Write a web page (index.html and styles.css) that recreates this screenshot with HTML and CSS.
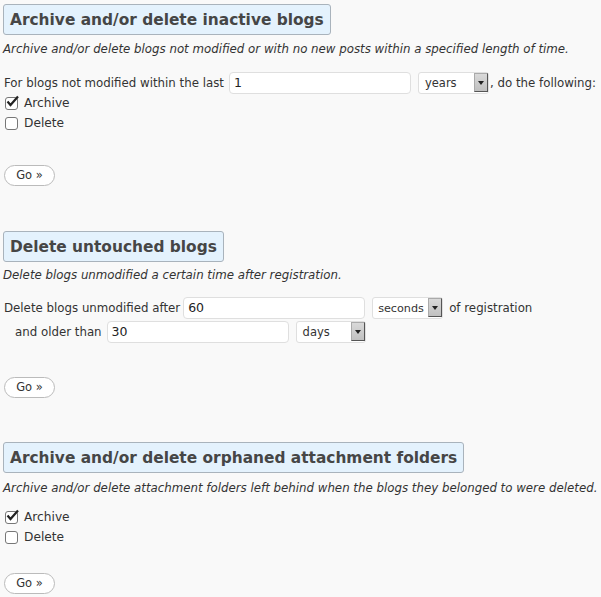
FILE: index.html
```html
<!DOCTYPE html>
<html>
<head>
<meta charset="utf-8">
<link rel="stylesheet" href="styles.css">
</head>
<body>
<div class="page">
  <section class="sec sec1">
    <h2 class="title">Archive and/or delete inactive blogs</h2>
    <p class="desc">Archive and/or delete blogs not modified or with no new posts within a specified length of time.</p>
    <div class="row">
      <span class="lbl">For blogs not modified within the last</span>
      <span class="field"><span class="fv">1</span></span>
      <span class="sel w70"><span class="sv">years</span><span class="arr"><svg width="6" height="4" viewBox="0 0 6 4"><path d="M0 0H6L3 4Z" fill="#222"/></svg></span></span>
      <span class="lbl tight">, do the following:</span>
    </div>
    <div class="checks">
      <label class="chk"><span class="box"><svg width="15" height="13" viewBox="0 0 15 13"><path d="M2.5 6.5L5.5 10L13 1.5" fill="none" stroke="#222" stroke-width="2.2"/></svg></span>Archive</label>
      <label class="chk"><span class="box"></span>Delete</label>
    </div>
    <button class="go">Go &raquo;</button>
  </section>

  <section class="sec sec2">
    <h2 class="title">Delete untouched blogs</h2>
    <p class="desc">Delete blogs unmodified a certain time after registration.</p>
    <div class="row row1">
      <span class="lbl">Delete blogs unmodified after</span>
      <span class="field f2"><span class="fv">60</span></span>
      <span class="sel w70"><span class="sv">seconds</span><span class="arr"><svg width="6" height="4" viewBox="0 0 6 4"><path d="M0 0H6L3 4Z" fill="#222"/></svg></span></span>
      <span class="lbl">of registration</span>
    </div>
    <div class="row row2">
      <span class="lbl">and older than</span>
      <span class="field"><span class="fv">30</span></span>
      <span class="sel w69"><span class="sv">days</span><span class="arr"><svg width="6" height="4" viewBox="0 0 6 4"><path d="M0 0H6L3 4Z" fill="#222"/></svg></span></span>
    </div>
    <button class="go">Go &raquo;</button>
  </section>

  <section class="sec sec3">
    <h2 class="title">Archive and/or delete orphaned attachment folders</h2>
    <p class="desc">Archive and/or delete attachment folders left behind when the blogs they belonged to were deleted.</p>
    <div class="checks">
      <label class="chk"><span class="box"><svg width="15" height="13" viewBox="0 0 15 13"><path d="M2.5 6.5L5.5 10L13 1.5" fill="none" stroke="#222" stroke-width="2.2"/></svg></span>Archive</label>
      <label class="chk"><span class="box"></span>Delete</label>
    </div>
    <button class="go">Go &raquo;</button>
  </section>
</div>
</body>
</html>
```

FILE: styles.css
```css
html, body {
  margin: 0;
  padding: 0;
  background: #f9f9f9;
}
body {
  font-family: "DejaVu Sans", Verdana, sans-serif;
  font-size: 11.8px;
  color: #333;
}
.page {
  padding: 4px 0 0 3px;
}
.sec {
  display: flex;
  flex-direction: column;
  align-items: flex-start;
}
.sec2 { margin-top: 45px; }
.sec3 { margin-top: 44px; }
.title {
  margin: 0;
  box-sizing: border-box;
  height: 31px;
  padding: 0 6px;
  font-size: 15.4px;
  font-weight: bold;
  line-height: 30px;
  color: #464646;
  background: #e4f2fd;
  border: 1px solid #a9b3bc;
  border-radius: 3px;
  white-space: nowrap;
}
.desc {
  margin: 6px 0 0 0;
  font-style: italic;
  line-height: 16px;
  white-space: nowrap;
}
.sec2 .desc { margin-top: 5px; }
.sec3 .desc { margin-top: 7px; }
.row {
  display: flex;
  align-items: center;
  gap: 6px;
  margin-top: 15px;
  height: 21px;
  padding-left: 1px;
}
.row .field { margin-left: -1px; }
.row .field.f2 { margin-left: -3px; }
.row .sel { margin-left: 1px; }
.sec2 .row1 { margin-top: 14px; }
.sec2 .row2 {
  margin-top: 3px;
  padding-left: 12px;
}
.lbl { white-space: nowrap; }
.lbl.tight { margin-left: -5px; }
.field {
  box-sizing: border-box;
  width: 182px;
  height: 22px;
  background: #fff;
  border: 1px solid #dfdfdf;
  border-radius: 4px;
  display: flex;
  align-items: center;
  padding-left: 4px;
  font-size: 12.5px;
  color: #222;
}
.sel {
  box-sizing: border-box;
  height: 22px;
  background: #fff;
  border: 1px solid #dfdfdf;
  border-radius: 3px;
  display: flex;
  align-items: center;
  justify-content: space-between;
  padding-left: 6px;
  color: #333;
  font-size: 11.5px;
}
.sec2 .row1 .sel { padding-left: 5px; font-size: 11.2px; }
.sel.w70 { width: 71px; }
.sel.w69 { width: 70px; }
.sv { padding-top: 1px; }
.arr {
  box-sizing: border-box;
  width: 14px;
  height: 19px;
  margin-right: 0;
  background: linear-gradient(#d9d9d9, #c0c0c0);
  border: 1px solid #aaa;
  border-right-color: #555;
  border-bottom-color: #555;
  display: flex;
  align-items: center;
  justify-content: center;
  flex-shrink: 0;
}
.checks {
  display: flex;
  flex-direction: column;
  margin-top: 0;
  padding-left: 2px;
}
.sec3 .checks { margin-top: 11px; }
.chk {
  display: flex;
  align-items: center;
  height: 20px;
  gap: 6px;
  font-size: 12.2px;
}
.box {
  position: relative;
  box-sizing: border-box;
  width: 13px;
  height: 13px;
  border: 1px solid #777;
  border-radius: 3px;
  background: #fff;
}
.box svg {
  position: absolute;
  left: -1px;
  top: -3px;
}
.go {
  margin-top: 32px;
  margin-left: 1px;
  box-sizing: border-box;
  width: 51px;
  height: 21px;
  border: 1px solid #bbb;
  border-radius: 11px;
  background: #fff;
  font-family: inherit;
  font-size: 11.5px;
  color: #333;
  padding: 0;
  line-height: 19px;
}
.sec2 .go { margin-top: 35px; }
.sec3 .go { margin-top: 26px; }
```
